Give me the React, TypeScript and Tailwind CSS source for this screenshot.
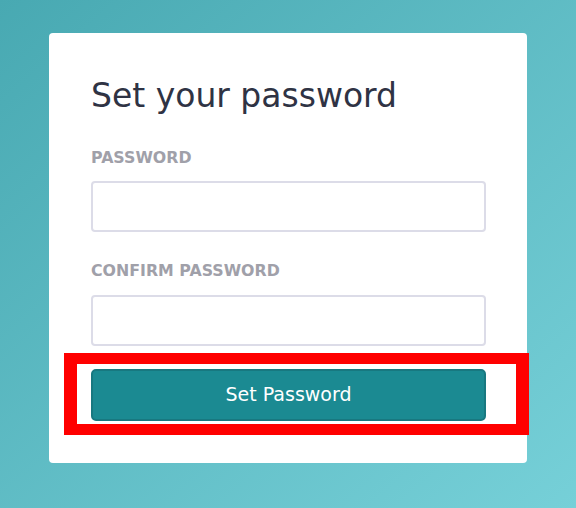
const SetPassword = () => {
    return (
        <div className="min-h-[508px] w-full bg-gradient-to-br from-[#48a9b2] to-[#76d0d8] pt-[33px] pb-[45px] font-['DejaVu_Sans',sans-serif]">
            <div className="relative mx-auto w-[478px] rounded-[4px] bg-white pt-[46px] pb-[42px] pl-[42px] pr-[41px]">
                {/* Title */}
                <h1 className="text-[33px] leading-none font-normal text-[#2f3344]">Set your password</h1>

                <form className="mt-[38px] flex flex-col">
                    {/* Password */}
                    <label htmlFor="password" className="text-[15.8px] leading-none font-bold text-[#a0a0a9]">
                        PASSWORD
                    </label>
                    <input
                        id="password"
                        type="password"
                        className="mt-[15px] h-[51px] w-full rounded-[4px] border-2 border-[#dcdce8] bg-white px-3 outline-none"
                    />

                    {/* Confirm password */}
                    <label htmlFor="confirm" className="mt-[31px] text-[15.8px] leading-none font-bold text-[#a0a0a9]">
                        CONFIRM PASSWORD
                    </label>
                    <input
                        id="confirm"
                        type="password"
                        className="mt-[16px] h-[51px] w-full rounded-[4px] border-2 border-[#dcdce8] bg-white px-3 outline-none"
                    />

                    {/* Submit */}
                    <button
                        type="button"
                        className="mt-[23px] h-[52px] w-full rounded-[5px] border-2 border-[#187880] bg-[#1b8a92] text-[19px] leading-none text-white"
                    >
                        Set Password
                    </button>
                </form>

                {/* Highlight */}
                <div className="pointer-events-none absolute left-[15px] top-[320px] h-[82px] w-[465px] border-x-[13px] border-y-[11px] border-[#ff0000]" />
            </div>
        </div>
    );
};

export default SetPassword;
